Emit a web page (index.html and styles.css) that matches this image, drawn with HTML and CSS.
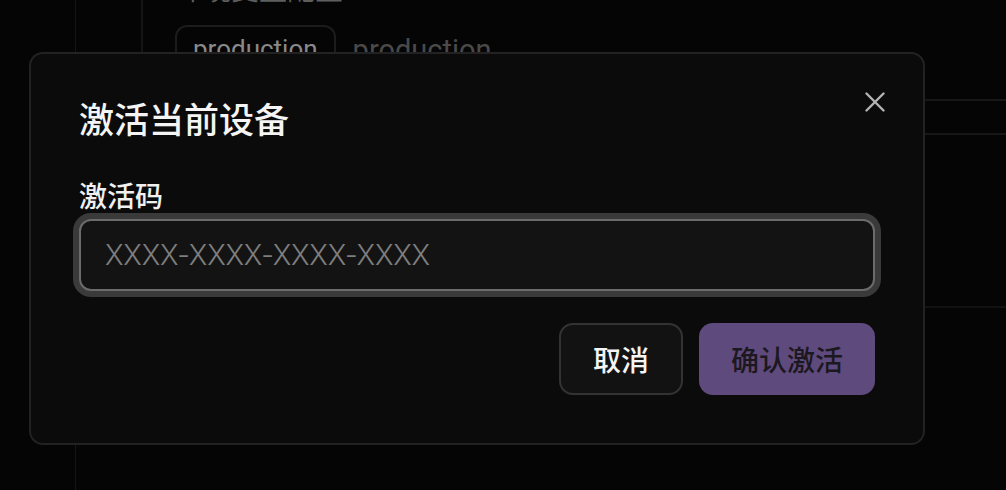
FILE: index.html
```html
<!DOCTYPE html>
<html lang="zh-CN">
<head>
<meta charset="utf-8">
<title>激活当前设备</title>
<link rel="stylesheet" href="styles.css">
</head>
<body>
<div class="app">
  <aside class="sidebar"></aside>
  <main class="main">
    <section class="env">
      <div class="env-head">
        <div class="env-title">环境变量配置</div>
        <div class="tags">
          <span class="tag">production</span>
          <span class="tag-plain">production</span>
        </div>
      </div>
      <div class="table">
        <div class="row row-head"></div>
        <div class="row row-body"></div>
      </div>
    </section>
  </main>
</div>

<div class="overlay">
  <div class="dialog" role="dialog" aria-labelledby="dlg-title">
    <button class="close" aria-label="关闭">
      <svg viewBox="0 0 20 20" width="20" height="20"><path d="M1.5 1.5 18.5 18.5M18.5 1.5 1.5 18.5" stroke="#b4b4b4" stroke-width="2.4" stroke-linecap="round" fill="none"/></svg>
    </button>
    <h2 id="dlg-title" class="dialog-title">激活当前设备</h2>
    <label class="field-label" for="code">激活码</label>
    <input id="code" class="field-input" type="text" placeholder="XXXX-XXXX-XXXX-XXXX">
    <div class="actions">
      <button class="btn btn-cancel">取消</button>
      <button class="btn btn-primary">确认激活</button>
    </div>
  </div>
</div>
</body>
</html>
```
FILE: styles.css
```css
* { box-sizing: border-box; }

html, body {
  margin: 0;
  height: 490px;
  overflow: hidden;
  background: #050505;
  font-family: "Inter", "Noto Sans CJK SC", sans-serif;
  color: #eeeeee;
}

.app {
  display: flex;
  height: 490px;
}

.sidebar {
  width: 76px;
  flex: none;
  border-right: 1px solid #151515;
}

.main {
  flex: 1;
  padding-left: 65px;
}

.env {
  border-left: 2px solid #151515;
  height: 308px;
}

.env-head {
  padding-left: 32px;
}

.env-title {
  margin-top: -25px;
  font-size: 28px;
  line-height: 30px;
  color: #5e5e5e;
}

.tags {
  margin-top: 20px;
  display: flex;
  align-items: center;
  gap: 17px;
}

.tag {
  height: 50px;
  padding: 0 16px;
  border: 2px solid #1c1c1c;
  border-radius: 12px;
  font-size: 26px;
  line-height: 44px;
  color: #8a8a8a;
  font-family: "Roboto", "Noto Sans CJK SC", sans-serif;
}

.tag-plain {
  font-size: 29px;
  line-height: 44px;
  color: #4a4a4a;
  font-family: "Roboto", "Noto Sans CJK SC", sans-serif;
}

.table {
  margin-top: 24px;
}

.row-head {
  height: 36px;
  border-top: 2px solid #171717;
  border-bottom: 2px solid #171717;
}

.row-body {
  height: 173px;
  border-bottom: 2px solid #121212;
}

/* dialog overlay */
.overlay {
  position: fixed;
  inset: 0;
  padding: 52px 0 0 29px;
}

.dialog {
  position: relative;
  width: 896px;
  background: #0b0b0b;
  border: 2px solid #222222;
  border-radius: 14px;
  padding: 44px 48px 48px;
  display: flex;
  flex-direction: column;
}

.close {
  position: absolute;
  top: 37px;
  right: 37px;
  width: 22px;
  height: 22px;
  padding: 1px;
  border: 0;
  background: transparent;
  display: flex;
}

.dialog-title {
  margin: 0;
  font-size: 35px;
  line-height: 40px;
  font-weight: 500;
  color: #f4f4f4;
  font-family: "Noto Sans CJK SC", sans-serif;
}

.field-label {
  margin-top: 41px;
  font-size: 28px;
  line-height: 32px;
  font-weight: 500;
  color: #f0f0f0;
  font-family: "Noto Sans CJK SC", sans-serif;
}

.field-input {
  margin-top: 8px;
  width: 100%;
  height: 72px;
  border: 2px solid #6b6b6b;
  border-radius: 12px;
  background: #131313;
  box-shadow: 0 0 0 6px #3a3a3a;
  padding: 0 24px;
  font-family: "Inter", sans-serif;
  font-size: 28px;
  font-weight: 300;
  letter-spacing: -0.2px;
  color: #eeeeee;
  outline: none;
}

.field-input::placeholder {
  color: #7e7e7e;
}

.actions {
  margin-top: 32px;
  display: flex;
  justify-content: flex-end;
  gap: 16px;
}

.btn {
  height: 72px;
  padding: 0 32px;
  border-radius: 14px;
  font-size: 28px;
  font-weight: 500;
  font-family: "Noto Sans CJK SC", sans-serif;
  line-height: 1;
}

.btn-cancel {
  background: #121212;
  border: 2px solid #333333;
  color: #f4f4f4;
}

.btn-primary {
  background: #5f4a7d;
  border: 0;
  color: #1b1820;
}
```
